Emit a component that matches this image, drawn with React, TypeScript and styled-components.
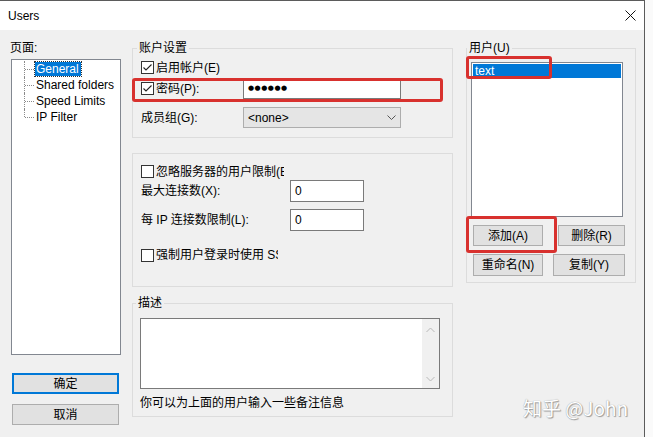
import React from "react";
import styled, { createGlobalStyle } from "styled-components";

const GlobalStyle = createGlobalStyle`
  html, body { margin: 0; padding: 0; }
  body {
    background: #fafafa;
    font-family: "Liberation Sans", "Noto Sans CJK SC", sans-serif;
    font-size: 12px;
    color: #000;
  }
`;

const PAGES = [
  { id: 1, title: "General", selected: true },
  { id: 2, title: "Shared folders" },
  { id: 3, title: "Speed Limits" },
  { id: 4, title: "IP Filter" },
];

function Check({ checked }: { checked?: boolean }) {
  return (
    <CheckBox>
      {checked && (
        <svg width="11" height="11" viewBox="0 0 11 11">
          <path d="M1.5 5.5 L4 8 L9.5 2.5" fill="none" stroke="#222" strokeWidth="1.1" />
        </svg>
      )}
    </CheckBox>
  );
}

function App() {
  return (
    <Page>
      <GlobalStyle />
      <Window>
        <TitleBar>
          <span>Users</span>
          <svg width="11" height="11" viewBox="0 0 11 11">
            <path d="M0.5 0.5 L10.5 10.5 M10.5 0.5 L0.5 10.5" stroke="#111" strokeWidth="1" />
          </svg>
        </TitleBar>
        <Body>
          <LeftPane>
            <PageLabel>页面:</PageLabel>
            <Tree>
              {PAGES.map((item, i) => (
                <TreeItem key={item.id}>
                  <Branch $last={i === PAGES.length - 1} />
                  <TreeLabel $selected={item.selected}>{item.title}</TreeLabel>
                </TreeItem>
              ))}
            </Tree>
            <DialogButton $primary $top={18}>确定</DialogButton>
            <DialogButton $top={10}>取消</DialogButton>
          </LeftPane>

          <MiddlePane>
            <Group $pad="2px 8px 9px">
              <Legend>账户设置</Legend>
              <Row $h={21}>
                <Check checked />
                <CheckText>启用帐户(E)</CheckText>
              </Row>
              <Row $h={21}>
                <FieldLabel $w={102}>
                  <Check checked />
                  <CheckText>密码(P):</CheckText>
                </FieldLabel>
                <Field $w={158} $h={21}>
                  <Dots>●●●●●●</Dots>
                </Field>
              </Row>
              <Row $h={21} $top={8}>
                <FieldLabel $w={102}>成员组(G):</FieldLabel>
                <Select>
                  <span>&lt;none&gt;</span>
                  <svg width="9" height="6" viewBox="0 0 9 6">
                    <path d="M0.5 0.5 L4.5 4.5 L8.5 0.5" fill="none" stroke="#555" strokeWidth="1" />
                  </svg>
                </Select>
              </Row>
            </Group>

            <Group $pad="9px 8px 22px" $top={15}>
              <Row $h={17} $clip={143}>
                <Check />
                <CheckText>忽略服务器的用户限制(B)</CheckText>
              </Row>
              <Row $h={22}>
                <FieldLabel $w={149}>最大连接数(X):</FieldLabel>
                <Field $w={74} $h={22}>0</Field>
              </Row>
              <Row $h={22} $top={7}>
                <FieldLabel $w={149}>每 IP 连接数限制(L):</FieldLabel>
                <Field $w={74} $h={22}>0</Field>
              </Row>
              <Row $h={18} $top={15} $clip={137}>
                <Check />
                <CheckText>强制用户登录时使用 SSL</CheckText>
              </Row>
            </Group>

            <Group $pad="8px 7px 6px" $top={9}>
              <Legend>描述</Legend>
              <Memo>
                <MemoArea />
                <MemoScroll>
                  <svg width="9" height="6" viewBox="0 0 9 6">
                    <path d="M0.5 5 L4.5 1 L8.5 5" fill="none" stroke="#b8b8b8" strokeWidth="1" />
                  </svg>
                  <svg width="9" height="6" viewBox="0 0 9 6">
                    <path d="M0.5 1 L4.5 5 L8.5 1" fill="none" stroke="#b8b8b8" strokeWidth="1" />
                  </svg>
                </MemoScroll>
              </Memo>
              <Hint>你可以为上面的用户输入一些备注信息</Hint>
            </Group>
          </MiddlePane>

          <RightPane>
            <Group $pad="7px 10px 6px 4px">
              <Legend>用户(U)</Legend>
              <UserList>
                <UserItem $selected>text</UserItem>
              </UserList>
              <ButtonRow $top={8}>
                <SmallButton $w={70} $h={21}>添加(A)</SmallButton>
                <SmallButton $w={67} $h={21}>删除(R)</SmallButton>
              </ButtonRow>
              <ButtonRow $top={8}>
                <SmallButton $w={70} $h={22}>重命名(N)</SmallButton>
                <SmallButton $w={72} $h={22}>复制(Y)</SmallButton>
              </ButtonRow>
            </Group>
          </RightPane>
        </Body>

        <Highlight style={{ left: 132, top: 77, width: 311, height: 24 }} />
        <Highlight style={{ left: 466, top: 55, width: 86, height: 23 }} />
        <Highlight style={{ left: 466, top: 215, width: 91, height: 37 }} />
        <Watermark>知乎 @John</Watermark>
      </Window>
    </Page>
  );
}

export default App;

const Page = styled.div`
  width: 653px;
  height: 437px;
  overflow: hidden;
`;

const Window = styled.div`
  position: relative;
  width: 645px;
  height: 437px;
  box-sizing: border-box;
  border-top: 1px solid #5b5b5b;
  border-right: 1px solid #5b5b5b;
  background: #f0f0f0;
  display: flex;
  flex-direction: column;
`;

const TitleBar = styled.div`
  height: 29px;
  flex: none;
  background: #fff;
  display: flex;
  align-items: center;
  justify-content: space-between;
  padding: 0 8px 0 8px;
  font-size: 12px;
`;

const Body = styled.div`
  flex: 1;
  display: flex;
  line-height: 14px;
`;

const LeftPane = styled.div`
  width: 110px;
  margin-left: 11px;
  padding-top: 11px;
  display: flex;
  flex-direction: column;
`;

const PageLabel = styled.div`
  margin-left: -1px;
  margin-bottom: 4px;
`;

const Tree = styled.div`
  height: 296px;
  box-sizing: border-box;
  border: 1px solid #828790;
  background: #fff;
  padding-top: 1px;
`;

const TreeItem = styled.div`
  height: 16px;
  display: flex;
  align-items: center;
`;

const Branch = styled.span<{ $last?: boolean }>`
  position: relative;
  width: 23px;
  height: 16px;
  flex: none;
  &::before {
    content: "";
    position: absolute;
    left: 12px;
    top: 0;
    bottom: ${(p) => (p.$last ? "8px" : "0")};
    border-left: 1px dotted #8a8a8a;
  }
  &::after {
    content: "";
    position: absolute;
    left: 13px;
    top: 8px;
    width: 9px;
    border-top: 1px dotted #8a8a8a;
  }
`;

const TreeLabel = styled.span<{ $selected?: boolean }>`
  padding: 0 2px 0 1px;
  line-height: 14px;
  white-space: nowrap;
  background: ${(p) => (p.$selected ? "#0078d7" : "transparent")};
  color: ${(p) => (p.$selected ? "#fff" : "#000")};
  outline: ${(p) => (p.$selected ? "1px dotted #333" : "none")};
`;

const DialogButton = styled.div<{ $primary?: boolean; $top: number }>`
  margin-top: ${(p) => p.$top}px;
  margin-left: 1px;
  width: 107px;
  height: 21px;
  box-sizing: border-box;
  display: flex;
  align-items: center;
  justify-content: center;
  background: #e1e1e1;
  border: 1px solid ${(p) => (p.$primary ? "#0078d7" : "#adadad")};
  box-shadow: ${(p) => (p.$primary ? "inset 0 0 0 1px #0078d7" : "none")};
`;

const MiddlePane = styled.div`
  width: 321px;
  margin-left: 11px;
  padding-top: 11px;
  display: flex;
  flex-direction: column;
`;

const RightPane = styled.div`
  width: 170px;
  margin-left: 13px;
  padding-top: 11px;
`;

const Group = styled.fieldset<{ $pad: string; $top?: number }>`
  margin: ${(p) => p.$top || 0}px 0 0 0;
  padding: ${(p) => p.$pad};
  border: 1px solid #dcdcdc;
  min-width: 0;
  box-sizing: border-box;
`;

const Legend = styled.legend`
  padding: 0 2px;
  margin-left: -4px;
  line-height: 14px;
`;

const Row = styled.div<{ $h: number; $top?: number; $clip?: number }>`
  height: ${(p) => p.$h}px;
  margin-top: ${(p) => p.$top || 0}px;
  display: flex;
  align-items: center;
  white-space: nowrap;
  overflow: hidden;
  width: ${(p) => (p.$clip ? `${p.$clip}px` : "auto")};
`;

const CheckBox = styled.span`
  width: 13px;
  height: 13px;
  box-sizing: border-box;
  border: 1px solid #333;
  background: #fff;
  flex: none;
  display: flex;
  align-items: center;
  justify-content: center;
`;

const CheckText = styled.span`
  margin-left: 2px;
`;

const FieldLabel = styled.span<{ $w: number }>`
  width: ${(p) => p.$w}px;
  flex: none;
  display: flex;
  align-items: center;
`;

const Field = styled.div<{ $w: number; $h: number }>`
  width: ${(p) => p.$w}px;
  height: ${(p) => p.$h}px;
  box-sizing: border-box;
  border: 1px solid #7a7a7a;
  background: #fff;
  padding: 3px 4px;
  display: flex;
  align-items: flex-start;
`;

const Dots = styled.span`
  font-family: "DejaVu Sans", sans-serif;
  font-size: 7px;
  letter-spacing: 0.5px;
  line-height: 13px;
`;

const Select = styled.div`
  width: 158px;
  height: 21px;
  box-sizing: border-box;
  border: 1px solid #adadad;
  background: #e5e5e5;
  padding: 0 4px 0 4px;
  display: flex;
  align-items: center;
  justify-content: space-between;
`;

const Memo = styled.div`
  width: 300px;
  height: 71px;
  box-sizing: border-box;
  border: 1px solid #7a7a7a;
  background: #fff;
  display: flex;
`;

const MemoArea = styled.div`
  flex: 1;
`;

const MemoScroll = styled.div`
  width: 17px;
  background: #f0f0f0;
  display: flex;
  flex-direction: column;
  justify-content: space-between;
  align-items: center;
  padding: 8px 0 6px;
`;

const Hint = styled.div`
  margin-top: 7px;
`;

const UserList = styled.div`
  width: 152px;
  height: 155px;
  box-sizing: border-box;
  border: 1px solid #828790;
  background: #fff;
  padding: 1px;
`;

const UserItem = styled.div<{ $selected?: boolean }>`
  height: 14px;
  padding-left: 2px;
  line-height: 14px;
  background: ${(p) => (p.$selected ? "#0078d7" : "transparent")};
  color: ${(p) => (p.$selected ? "#fff" : "#000")};
`;

const ButtonRow = styled.div<{ $top: number }>`
  margin-top: ${(p) => p.$top}px;
  padding-left: 2px;
  display: flex;
  justify-content: space-between;
`;

const SmallButton = styled.div<{ $w: number; $h: number }>`
  width: ${(p) => p.$w}px;
  height: ${(p) => p.$h}px;
  box-sizing: border-box;
  border: 1px solid #adadad;
  background: #e1e1e1;
  display: flex;
  align-items: center;
  justify-content: center;
`;

const Highlight = styled.div`
  position: absolute;
  box-sizing: border-box;
  border: 3px solid #d8312e;
  border-radius: 3px;
  pointer-events: none;
`;

const Watermark = styled.div`
  position: absolute;
  left: 523px;
  top: 396px;
  font-family: "Noto Sans CJK SC", sans-serif;
  font-size: 19px;
  line-height: 22px;
  color: #fff;
  text-shadow: 0 0 1px #888, 1px 1px 1px rgba(0, 0, 0, 0.35);
  white-space: nowrap;
`;
